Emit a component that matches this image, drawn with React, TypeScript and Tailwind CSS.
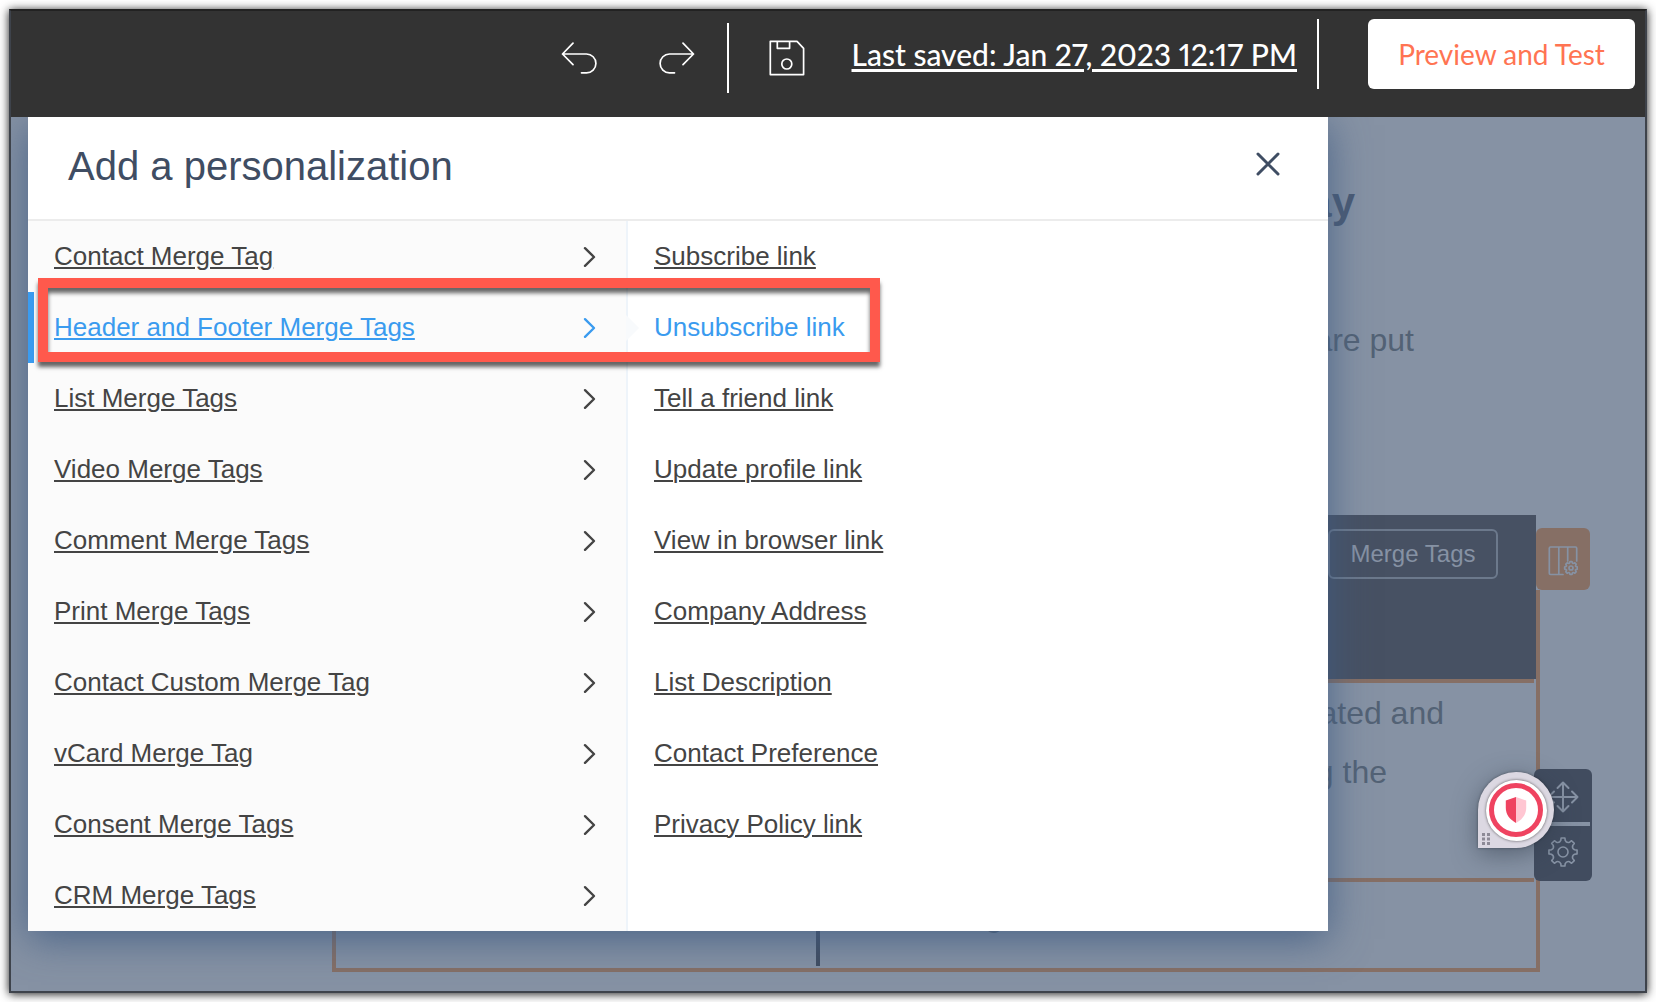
const categories = [
  "Contact Merge Tag",
  "Header and Footer Merge Tags",
  "List Merge Tags",
  "Video Merge Tags",
  "Comment Merge Tags",
  "Print Merge Tags",
  "Contact Custom Merge Tag",
  "vCard Merge Tag",
  "Consent Merge Tags",
  "CRM Merge Tags",
];

const links = [
  "Subscribe link",
  "Unsubscribe link",
  "Tell a friend link",
  "Update profile link",
  "View in browser link",
  "Company Address",
  "List Description",
  "Contact Preference",
  "Privacy Policy link",
];

const ACTIVE = 1;

// Outline of a gear with soft, flared teeth around (c, c).
function gearPath(c: number, outer: number, root: number, teeth: number) {
  const step = (Math.PI * 2) / teeth;
  const at = (r: number, a: number) =>
    `${(c + r * Math.sin(a)).toFixed(2)} ${(c - r * Math.cos(a)).toFixed(2)}`;
  let d = "";
  for (let i = 0; i < teeth; i++) {
    const a = i * step;
    d += `${i ? "L" : "M"}${at(outer, a - step * 0.17)}L${at(outer, a + step * 0.17)}`;
    d += `L${at(root + 1, a + step * 0.24)}Q${at(root - 1.4, a + step * 0.5)} ${at(root + 1, a + step * 0.76)}`;
  }
  return d + "Z";
}

function UndoIcon({ flipped = false }: { flipped?: boolean }) {
  return (
    <svg width="36" height="33" viewBox="0 0 36 33" fill="none" stroke="#fff" strokeWidth="1.7" strokeLinecap="round" strokeLinejoin="round" className={flipped ? "-scale-x-100" : ""}>
      <path d="M12 1.2 1.5 12 12 22.6M1.5 12H25.5a9.4 9.4 0 0 1 0 18.8H20.5" />
    </svg>
  );
}

function SaveIcon() {
  return (
    <svg width="36" height="36" viewBox="0 0 36 36" fill="none" stroke="#fff" strokeWidth="1.7" strokeLinejoin="round">
      <path d="M1.3 1.3H28L34.6 8.4V34.6H1.3ZM8.3 1.3V8.3H20.6V1.3" />
      <circle cx="17.8" cy="24" r="5" />
    </svg>
  );
}

function Chevron() {
  return (
    <svg width="13" height="22" viewBox="0 0 13 22" fill="none" stroke="currentColor" strokeWidth="2.4" strokeLinecap="round" strokeLinejoin="round">
      <path d="M2 2.2 11 11 2 19.8" />
    </svg>
  );
}

function Toolbar() {
  return (
    <header className="relative z-10 flex h-[106px] items-start justify-end bg-[#333333] pt-2 pr-[10px] font-['Lato',sans-serif]">
      <div className="mt-1 flex h-[70px] items-center">
        <button type="button" aria-label="Undo" className="mr-[62px]">
          <UndoIcon />
        </button>
        <button type="button" aria-label="Redo" className="mr-8">
          <UndoIcon flipped />
        </button>
        <div className="h-full w-0.5 bg-white" />
        <button type="button" aria-label="Save" className="mr-[47px] ml-10">
          <SaveIcon />
        </button>
      </div>
      <div className="flex h-[70px] items-center">
        <a href="#history" className="text-[30px] font-medium whitespace-nowrap text-white proportional-nums underline decoration-[3px] underline-offset-[3px]">
          Last saved: Jan 27, 2023 12:17 PM
        </a>
        <div className="ml-5 h-full w-0.5 bg-white" />
        <button type="button" className="ml-[49px] h-full w-[267px] rounded-md bg-white text-[28px] whitespace-nowrap text-[#ff7452]">
          Preview and Test
        </button>
      </div>
    </header>
  );
}

function EmailCanvas() {
  return (
    <div className="mr-[105px] ml-[321px] pt-14 text-[32px] leading-[59px] text-[#536275] [grid-area:1/1]">
      <h1 className="pr-[185px] text-right text-[42px] leading-[60px] font-bold text-[#4a5a73]">ay</h1>
      <p className="mt-[78px] pr-[126px] text-right">are put</p>
      <section className="mt-[145px]">
        <div className="relative flex h-[164px]">
          <div className="flex flex-1 items-start justify-end bg-[#475163] pt-[14px] pr-[38px]">
            <button type="button" className="h-[50px] w-[170px] rounded-md border-2 border-[#6c798c] text-2xl text-[#8692a4]">
              Merge Tags
            </button>
          </div>
          <div className="mt-[75px] w-1 bg-[#866f65]" />
          <button type="button" aria-label="Column settings" className="absolute top-[13px] right-[-50px] flex h-[62px] w-[54px] items-center justify-center rounded-md bg-[#866f65] pt-1">
            <svg width="30" height="32" viewBox="0 0 30 32" fill="none" stroke="#8692a4" strokeWidth="1.7" strokeLinejoin="round" strokeLinecap="round">
              <path d="M15 29.5H2.5a1.2 1.2 0 0 1-1.2-1.2V3.2A1.2 1.2 0 0 1 2.5 2h25a1.2 1.2 0 0 1 1.2 1.2V16M10.8 2v27.5M19.7 2v14" />
              <path d={gearPath(23, 6.4, 5.2, 8)} />
              <circle cx="23" cy="23" r="2" />
            </svg>
          </button>
        </div>
        <div className="relative border-x-4 border-b-4 border-[#866f65]">
          <div className="mr-0.5 h-1 bg-[#866f65]" />
          <div className="h-[195px] pt-px text-right">
            <p className="pr-[92px]">ated and</p>
            <p className="pr-[149px]">g the</p>
          </div>
          <div className="mr-0.5 h-1 bg-[#866f65]" />
          <div className="flex h-[86px] pb-0.5">
            <div className="w-2/5" />
            <div className="w-1 bg-[#404c60]" />
            <p className="flex-1 pt-1 pl-[165px]">g</p>
          </div>
          <div className="absolute top-[90px] right-[-56px] flex w-[58px] flex-col overflow-hidden rounded-md bg-[#414c5f]">
            <button type="button" aria-label="Move" className="flex h-[53px] items-center justify-center pt-0.5">
              <svg width="32" height="32" viewBox="0 0 32 32" fill="none" stroke="#8692a4" strokeWidth="2" strokeLinecap="round" strokeLinejoin="round">
                <path d="M16 1.5v29M1.5 16h29M10.5 7 16 1.5 21.5 7M10.5 25 16 30.5 21.5 25M7 10.5 1.5 16 7 21.5M25 10.5 30.5 16 25 21.5" />
              </svg>
            </button>
            <div className="mr-0.5 h-1 bg-[#8692a4]" />
            <button type="button" aria-label="Settings" className="flex h-[55px] items-center justify-center pb-1">
              <svg width="32" height="32" viewBox="0 0 32 32" fill="none" stroke="#8692a4" strokeWidth="1.6" strokeLinejoin="round">
                <path d={gearPath(16, 14.2, 10.8, 8)} />
                <circle cx="16" cy="16" r="5" />
              </svg>
            </button>
          </div>
        </div>
      </section>
    </div>
  );
}

function PersonalizationDialog() {
  return (
    <div
      role="dialog"
      aria-labelledby="dialog-title"
      className="relative z-[1] mr-[317px] ml-[17px] self-start bg-white shadow-[0_8px_38px_rgba(64,92,130,0.85)] [grid-area:1/1]"
    >
      <div className="flex h-[104px] items-start justify-between border-b-2 border-[#ececec] pt-[25px] pr-12 pl-10">
        <h2 id="dialog-title" className="text-[40px] leading-[48px] text-[#3f4d63]">Add a personalization</h2>
        <button type="button" aria-label="Close" className="mt-[10px]">
          <svg width="24" height="24" viewBox="0 0 24 24" fill="none" stroke="#3f4d63" strokeWidth="3" strokeLinecap="round">
            <path d="M2 2 22 22M22 2 2 22" />
          </svg>
        </button>
      </div>
      <div className="relative flex text-[26px] leading-[30px] text-[#444444]">
        <ul className="w-[600px] border-r-2 border-[#eef4fa] bg-[#fbfbfb]">
          {categories.map((name, i) => (
            <li key={name} className={i === ACTIVE ? "relative text-[#3a9bef]" : ""}>
              <a
                href="#category"
                className={
                  i === ACTIVE
                    ? "flex h-[71px] items-center justify-between border-l-6 border-[#3a9bef] pr-[30px] pl-5"
                    : "flex h-[71px] items-center justify-between pr-[30px] pl-[26px]"
                }
              >
                <span className="pb-0.5 underline decoration-2 underline-offset-2">{name}</span>
                <Chevron />
              </a>
              {i === ACTIVE && (
                <svg width="14" height="26" viewBox="0 0 14 26" className="absolute top-[23px] -right-[14px]">
                  <path d="M0 0 13 13 0 26Z" fill="#f8fafc" />
                </svg>
              )}
            </li>
          ))}
        </ul>
        <ul className="flex-1">
          {links.map((name, i) => (
            <li key={name} className="flex h-[71px] items-center pb-0.5 pl-[26px]">
              <a href="#tag" className={i === ACTIVE ? "text-[#3a9bef]" : "underline decoration-2 underline-offset-2"}>
                {name}
              </a>
            </li>
          ))}
        </ul>
        <div
          aria-hidden="true"
          className="pointer-events-none absolute top-[57px] left-[10px] h-[84px] w-[842px] border-10 border-[#ff594c] shadow-[0_5px_4px_rgba(0,0,0,0.6),inset_0_5px_4px_rgba(0,0,0,0.6)]"
        />
      </div>
    </div>
  );
}

function ShieldBadge() {
  return (
    <button
      type="button"
      aria-label="Privacy shield"
      className="absolute top-[655px] right-[91px] z-[2] flex size-[76px] items-center justify-center rounded-full rounded-bl-lg bg-[#dcd8e2] shadow-[0_6px_24px_rgba(50,60,75,0.55),0_0_3px_rgba(0,0,0,0.4)]"
    >
      <span className="flex size-[61px] items-center justify-center rounded-full bg-white shadow-[0_0_3px_rgba(0,0,0,0.6)]">
        <span className="flex size-[54px] items-center justify-center rounded-full border-5 border-[#ef4360]">
          <svg width="22" height="28" viewBox="0 0 22 28">
            <path d="M11 1 21.2 4.5V12c0 6.5-4 11.5-10.2 15Z" fill="#ffc6d2" />
            <path d="M11 1 .8 4.5V12c0 6.5 4 11.5 10.2 15Z" fill="#ef4360" />
          </svg>
        </span>
      </span>
      <svg width="8" height="12" viewBox="0 0 8 12" fill="#8d8a96" className="absolute bottom-[3px] left-1">
        <path d="M0 0h3v3H0ZM5 0h3v3H5ZM0 4.5h3v3H0ZM5 4.5h3v3H5ZM0 9h3v3H0ZM5 9h3v3H5Z" />
      </svg>
    </button>
  );
}

export default function App() {
  return (
    <div className="flex min-h-screen flex-col bg-white p-[9px] font-['Liberation_Sans',Arial,sans-serif]">
      <div className="flex flex-1 flex-col border-2 border-[#3e434b] border-t-[#222222] shadow-[0_1px_9px_rgba(0,0,0,0.9)]">
        <Toolbar />
        <main className="relative grid flex-1 overflow-hidden bg-[#8692a4]">
          <EmailCanvas />
          <PersonalizationDialog />
          <ShieldBadge />
        </main>
      </div>
    </div>
  );
}
